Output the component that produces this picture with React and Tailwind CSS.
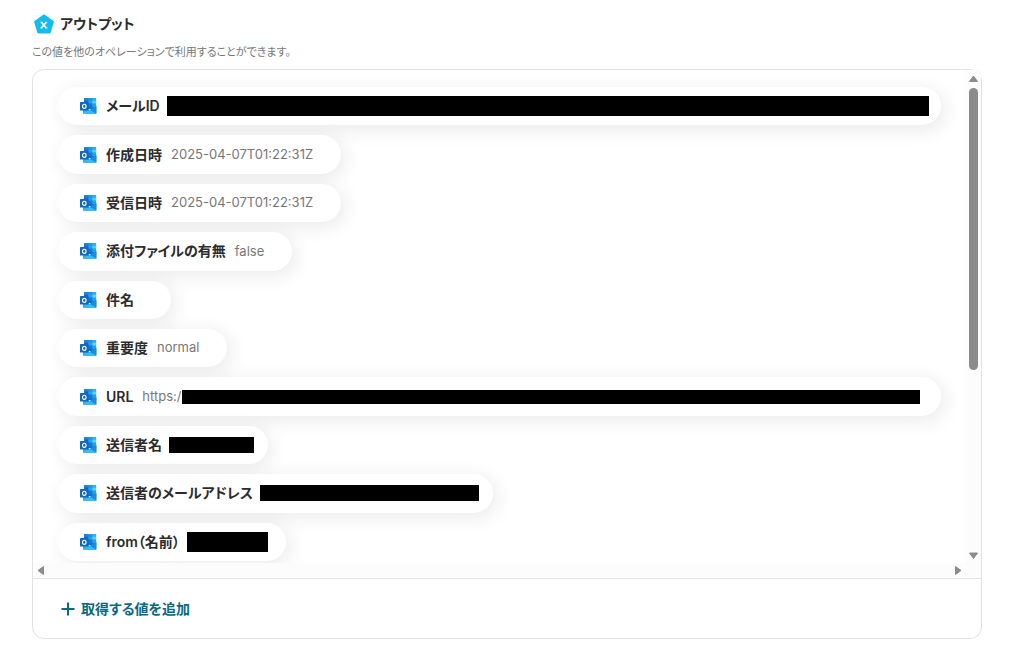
import clsx from 'clsx';

const outputs = [
  { label: 'メールID', masked: 'h-5 flex-1 -mr-4', full: true },
  { label: '作成日時', value: '2025-04-07T01:22:31Z' },
  { label: '受信日時', value: '2025-04-07T01:22:31Z' },
  { label: '添付ファイルの有無', value: 'false' },
  { label: '件名', value: '' },
  { label: '重要度', value: 'normal' },
  { label: 'URL', value: 'https:/', masked: 'h-3.5 flex-1 -mr-[7px]', full: true },
  { label: '送信者名', masked: 'h-4 w-[85px] -mr-3.5' },
  { label: '送信者のメールアドレス', masked: 'h-4 w-[219px] -mr-3.5' },
  { label: 'from（名前）', masked: 'h-5 w-[81px] -mr-2.5' },
];

function OutputIcon() {
  return (
    <svg className="size-5 shrink-0" viewBox="0 0 20 20" aria-hidden="true">
      <path
        d="M10 1.9 18.4 8 15.4 18H4.6L1.6 8Z"
        fill="#12bdee"
        stroke="#12bdee"
        strokeWidth="2.8"
        strokeLinejoin="round"
      />
      <path d="M7.4 8.2 12.2 14M12.4 8.2 7.2 14" stroke="#fff" strokeWidth="1.7" fill="none" />
      <path d="M6.4 8.3h2.4M11.2 8.3h2M6.2 13.9h2M11 13.9h2.4" stroke="#fff" strokeWidth="0.9" />
    </svg>
  );
}

function OutlookIcon() {
  return (
    <svg className="size-[18px] shrink-0" viewBox="0 0 18 18" aria-hidden="true">
      <path d="M5.6 1h10.8a.7.7 0 0 1 .7.7V12H5V1.6a.6.6 0 0 1 .6-.6Z" fill="#0f6fc6" />
      <path d="M5 1.6a.6.6 0 0 1 .6-.6h3.6v2.4H5z" fill="#1a86dc" />
      <path d="M9.2 1h4v2.4h-4z" fill="#2196e6" />
      <path d="M13.2 1h3.2a.7.7 0 0 1 .7.7v1.7h-3.9z" fill="#33aef0" />
      <path d="M9.2 3.4h4v3.4h-4z" fill="#28a0ea" />
      <path d="M13.2 3.4h3.9v3.4h-3.9z" fill="#50d4fb" />
      <path d="M9.2 6.8h4v3.4h-4z" fill="#1279d0" />
      <path d="M13.2 6.8h3.9v3.4h-3.9z" fill="#27a0ea" />
      <path d="M4 9.6 10.8 13 17.4 9.2v7a.8.8 0 0 1-.8.8H5a1 1 0 0 1-1-1Z" fill="#2aa9ee" />
      <path d="M17.4 9.2v7.3L10.6 12.9Z" fill="#1a8be0" />
      <path d="M4 15.5 10.8 13l6.4 3.7a.8.8 0 0 1-.6.3H5a1 1 0 0 1-1-1Z" fill="#35bdf3" />
      <rect x="1" y="5" width="8.6" height="8.6" rx="0.7" fill="#0d68c6" />
      <ellipse cx="5.3" cy="9.3" rx="1.8" ry="2.1" fill="none" stroke="#fff" strokeWidth="1.1" />
    </svg>
  );
}

function OutputChip({ label, value, masked, full }) {
  return (
    <li
      className={clsx(
        'flex items-center rounded-full bg-white pr-7 pl-[21px] shadow-[4px_4px_20px_rgba(0,0,0,0.09)]',
        full ? 'w-full' : 'w-fit'
      )}
    >
      <OutlookIcon />
      <span className="ml-[9px] text-sm font-semibold whitespace-nowrap text-[#2b2b2b]">{label}</span>
      {value !== undefined && (
        <span className="ml-[9px] text-[13px] whitespace-nowrap text-[#777]">{value}</span>
      )}
      {masked && <span className={clsx('bg-black', value === undefined && 'ml-[7px]', masked)} />}
    </li>
  );
}

function ScrollArrow({ label, className, d }) {
  return (
    <button type="button" aria-label={label} className={clsx('flex items-center justify-center', className)}>
      <svg className="size-[11px]" viewBox="0 0 11 11" aria-hidden="true">
        <path d={d} fill="#8b8b8b" stroke="#8b8b8b" strokeLinejoin="round" />
      </svg>
    </button>
  );
}

export default function App() {
  return (
    <main className="min-h-screen bg-white pt-3 pr-[51px] pb-4 pl-8 font-['Inter','Noto_Sans_CJK_JP',sans-serif] [font-feature-settings:'palt']">
      <header>
        <div className="flex h-6 items-center gap-1.5 pl-0.5">
          <OutputIcon />
          <h1 className="text-sm font-semibold text-[#2b2b2b]">アウトプット</h1>
        </div>
        <p className="mt-2 text-[11px] leading-4 text-[#777]">
          この値を他のオペレーションで利用することができます。
        </p>
      </header>

      <section className="mt-[9px] rounded-xl border border-[#e2e2e2]">
        <div className="flex h-[493px]">
          <ul className="grid min-w-0 flex-1 auto-rows-fr gap-2.5 overflow-hidden rounded-tl-xl pt-[17px] pr-[25px] pb-0.5 pl-[25px]">
            {outputs.map((item) => (
              <OutputChip key={item.label} {...item} />
            ))}
          </ul>
          <div className="flex w-[15px] flex-col items-center bg-[#fcfcfc]">
            <ScrollArrow label="上へスクロール" className="h-[18px] w-full" d="M5.5 2 9.5 7.5H1.5Z" />
            <div className="h-[282px] w-[9px] rounded-full bg-[#8b8b8b]" />
            <ScrollArrow label="下へスクロール" className="mt-auto h-[15px] w-full" d="M5.5 8.5 9.5 3H1.5Z" />
          </div>
        </div>
        <div className="flex h-[15px] justify-between bg-[#fcfcfc] pr-4">
          <ScrollArrow label="左へスクロール" className="w-4" d="M2 5.5 7.5 1.5V9.5Z" />
          <ScrollArrow label="右へスクロール" className="w-4" d="M9 5.5 3.5 1.5V9.5Z" />
        </div>
        <footer className="border-t border-[#e2e2e2] px-7 pt-5 pb-[19px]">
          <button type="button" className="flex items-center gap-1.5 text-sm font-semibold text-[#096884]">
            <svg className="size-[14px]" viewBox="0 0 14 14" aria-hidden="true">
              <path d="M7 .5v13M.5 7h13" stroke="currentColor" strokeWidth="2" />
            </svg>
            取得する値を追加
          </button>
        </footer>
      </section>
    </main>
  );
}
